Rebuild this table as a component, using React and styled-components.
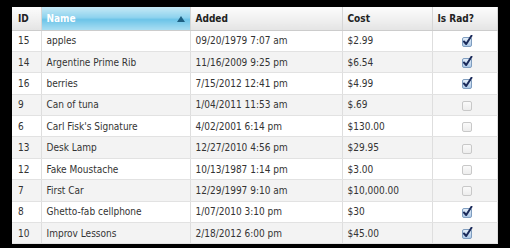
import React from 'react'
import styled, { createGlobalStyle } from 'styled-components'

const Global = createGlobalStyle`
  html, body {
    margin: 0;
    background: #000;
  }
`
const Frame = styled.div`
  width: 510px;
  height: 248px;
  overflow: hidden;
  padding: 7px 13px 0 12px;
  box-sizing: border-box;
  background: #000;
`
const Table = styled.table`
  width: 485px;
  border-collapse: collapse;
  table-layout: fixed;
  background: #fff;
  font-family: "DejaVu Sans Condensed", "DejaVu Sans", sans-serif;
  font-size: 10px;
  color: #333;
`
const Th = styled.th`
  height: 23px;
  padding: 0 0 0 ${p => p.$pad || 5}px;
  text-align: left;
  font-weight: bold;
  font-size: 10px;
  color: ${p => p.$sorted ? '#fff' : '#222'};
  background: ${p => p.$sorted
    ? 'linear-gradient(#c6e9f6 0%, #8fd3ee 45%, #6cc4e8 55%, #a9def2 100%)'
    : 'linear-gradient(#fcfcfc 0%, #f1f1f1 50%, #e4e4e4 100%)'};
  border-right: 1px solid #d6d6d6;
  border-bottom: 1px solid #ccc;
  position: relative;
  box-sizing: border-box;
`
const Arrow = styled.span`
  position: absolute;
  right: 5px;
  top: 9px;
  width: 0;
  height: 0;
  border-left: 4px solid transparent;
  border-right: 4px solid transparent;
  border-bottom: 6px solid #1d5f82;
`
const Tr = styled.tr`
  background: ${p => p.$alt ? '#f3f3f3' : '#fff'};
`
const Td = styled.td`
  height: 21.4px;
  padding: 0 0 0 ${p => p.$pad || 5}px;
  border-right: 1px solid #dedede;
  border-bottom: 1px solid #e2e2e2;
  text-align: ${p => p.$center ? 'center' : 'left'};
  white-space: nowrap;
  overflow: hidden;
  box-sizing: border-box;
`
const Box = styled.svg`
  display: inline-block;
  vertical-align: middle;
`

const Check = ({ on }) => (
  <Box width="12" height="12" viewBox="0 0 12 12">
    <defs>
      <linearGradient id={on ? 'gon' : 'goff'} x1="0" y1="0" x2="0" y2="1">
        <stop offset="0" stopColor={on ? '#e6f0fa' : '#fbfbfb'} />
        <stop offset="1" stopColor={on ? '#a9c6e6' : '#ececec'} />
      </linearGradient>
    </defs>
    <rect x="1.5" y="2.5" width="9" height="9" rx="1.5"
      fill={`url(#${on ? 'gon' : 'goff'})`}
      stroke={on ? '#7f9dbf' : '#c8c8c8'} strokeWidth="1" />
    {on && (
      <path d="M3 6.5 L5.2 9 L10.5 0.8" fill="none" stroke="#1a2a5a"
        strokeWidth="2" strokeLinecap="round" strokeLinejoin="round" />
    )}
  </Box>
)

const rows = [
  ['15', 'apples', '09/20/1979 7:07 am', '$2.99', true],
  ['14', 'Argentine Prime Rib', '11/16/2009 9:25 pm', '$6.54', true],
  ['16', 'berries', '7/15/2012 12:41 pm', '$4.99', true],
  ['9', 'Can of tuna', '1/04/2011 11:53 am', '$.69', false],
  ['6', "Carl Fisk's Signature", '4/02/2001 6:14 pm', '$130.00', false],
  ['13', 'Desk Lamp', '12/27/2010 4:56 pm', '$29.95', false],
  ['12', 'Fake Moustache', '10/13/1987 1:14 pm', '$3.00', false],
  ['7', 'First Car', '12/29/1997 9:10 am', '$10,000.00', false],
  ['8', 'Ghetto-fab cellphone', '1/07/2010 3:10 pm', '$30', true],
  ['10', 'Improv Lessons', '2/18/2012 6:00 pm', '$45.00', true],
]

export default function App() {
  return (
    <>
      <Global />
      <Frame>
        <Table>
          <colgroup>
            <col style={{ width: 29 }} />
            <col style={{ width: 149 }} />
            <col style={{ width: 152 }} />
            <col style={{ width: 90 }} />
            <col style={{ width: 65 }} />
          </colgroup>
          <thead>
            <tr>
              <Th $pad={6}>ID</Th>
              <Th $sorted>Name<Arrow /></Th>
              <Th>Added</Th>
              <Th>Cost</Th>
              <Th>Is Rad?</Th>
            </tr>
          </thead>
          <tbody>
            {rows.map((r, i) => (
              <Tr key={r[0]} $alt={i % 2 === 1}>
                <Td $pad={6}>{r[0]}</Td>
                <Td>{r[1]}</Td>
                <Td>{r[2]}</Td>
                <Td>{r[3]}</Td>
                <Td $center><Check on={r[4]} /></Td>
              </Tr>
            ))}
          </tbody>
        </Table>
      </Frame>
    </>
  )
}
